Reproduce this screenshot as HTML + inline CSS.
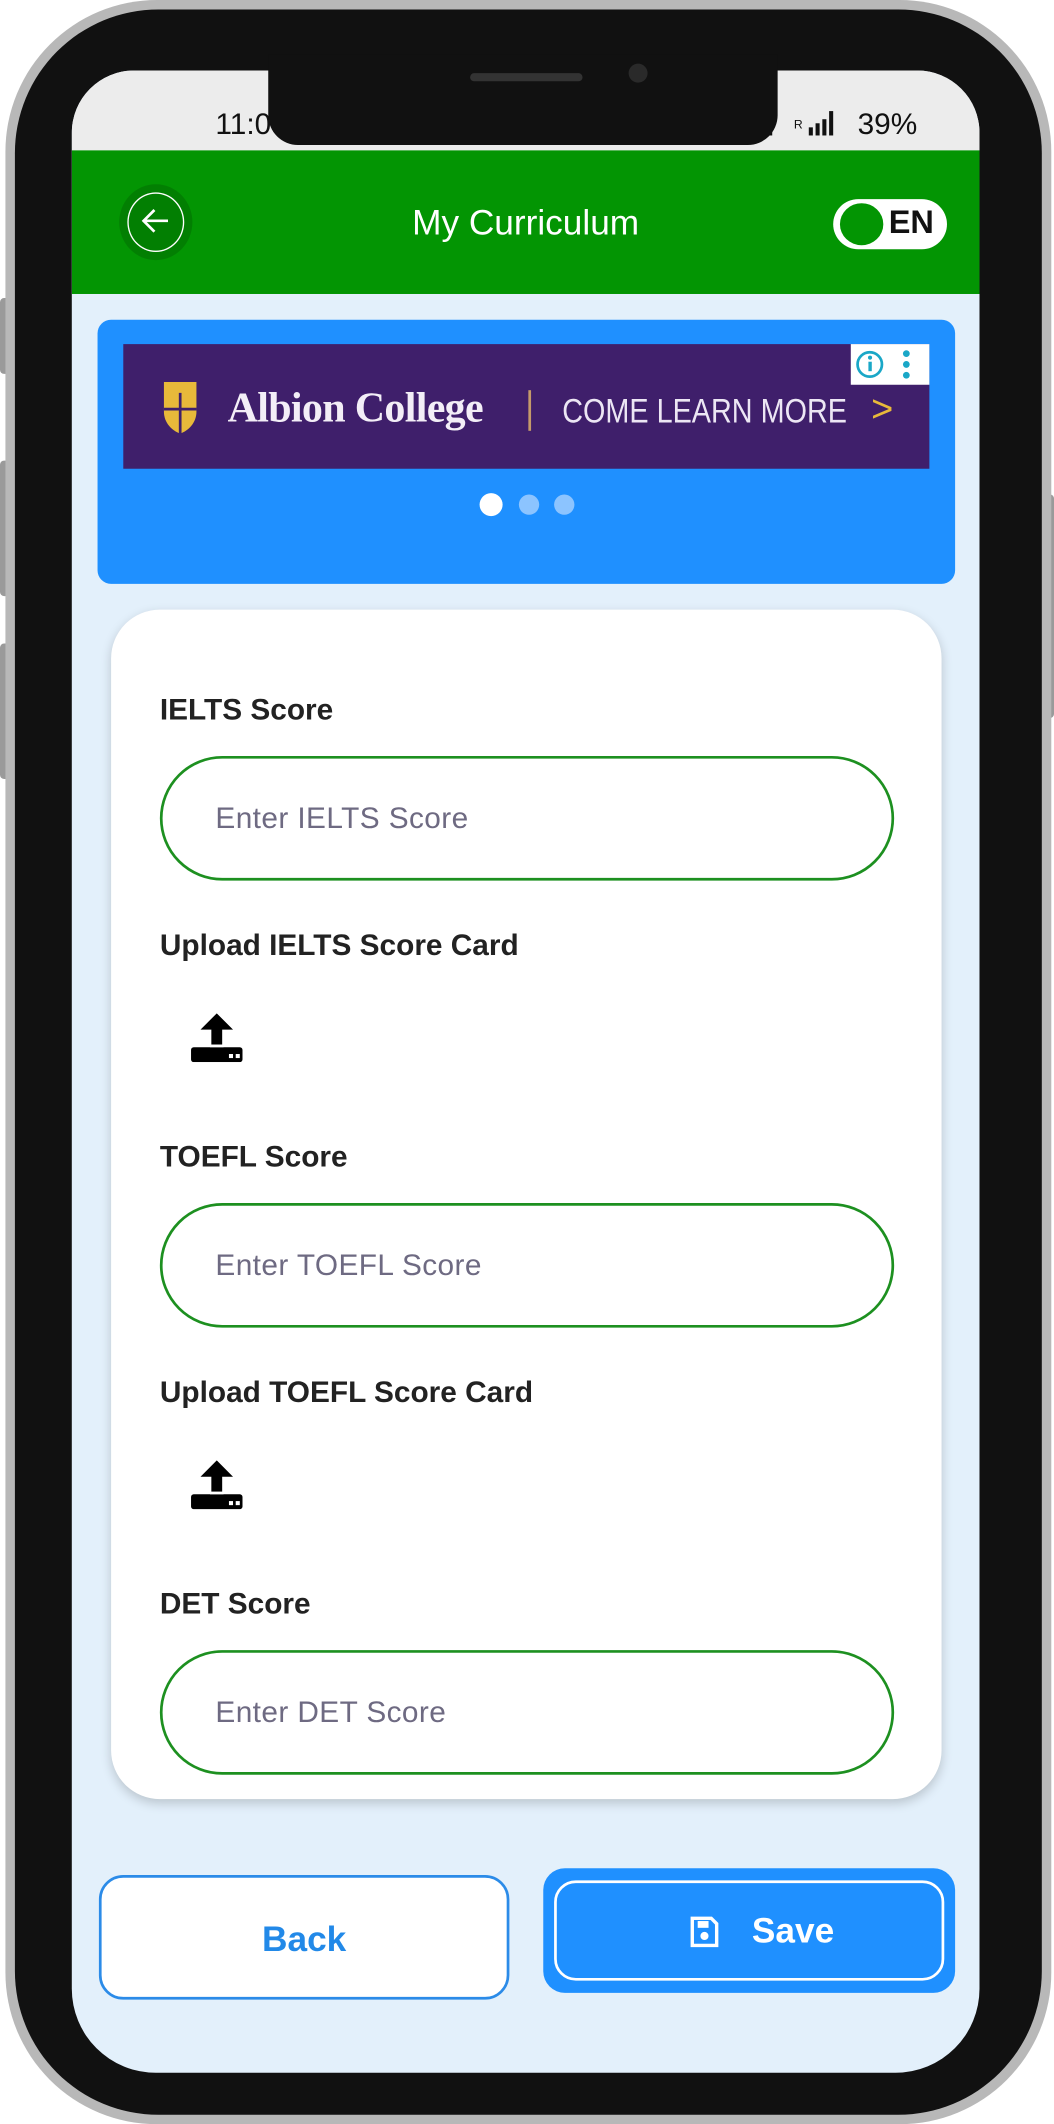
<!DOCTYPE html>
<html><head><meta charset="utf-8">
<style>
html,body{margin:0;padding:0;width:1054px;height:2124px;overflow:hidden;background:#fff;}
#w{position:absolute;left:0;top:0;width:778px;height:1568px;transform:scale(1.35476);transform-origin:0 0;font-family:"Liberation Sans",sans-serif;}
.a{position:absolute;}
.lbl{position:absolute;left:118px;font-weight:bold;font-size:22px;color:#222;}
.inp{position:absolute;left:118px;width:538px;height:88px;border:2px solid #1d9020;border-radius:46px;background:#fff;}
.inp span{position:absolute;left:39px;top:31px;font-size:22px;color:#6e6a82;letter-spacing:0.3px;}
</style></head><body><div id="w">
<div class="a" style="left:0;top:220px;width:8px;height:56px;background:#9a9a9a;border-radius:3px"></div>
<div class="a" style="left:0;top:340px;width:8px;height:100px;background:#9a9a9a;border-radius:3px"></div>
<div class="a" style="left:0;top:475px;width:8px;height:100px;background:#9a9a9a;border-radius:3px"></div>
<div class="a" style="left:770px;top:365px;width:8px;height:165px;background:#9a9a9a;border-radius:3px"></div>
<div class="a" style="left:4px;top:0;width:772px;height:1568px;background:#b8b8b8;border-radius:112px"></div>
<div class="a" style="left:11px;top:7px;width:758px;height:1554px;background:#111;border-radius:106px"></div>
<div class="a" style="left:53px;top:52px;width:670px;height:1478px;background:#e3f0fb;border-radius:46px 46px 62px 62px;overflow:hidden">
  <div class="a" style="left:0;top:0;width:670px;height:59px;background:#ececec"></div>
  <div class="a" style="left:106px;top:27px;font-size:22px;color:#111">11:05</div>
  <div class="a" style="left:580px;top:27px;font-size:22px;color:#111">39%</div>
  <div class="a" style="left:533px;top:35px;font-size:9px;color:#111">R</div>
  <svg class="a" style="left:508px;top:28px" width="70" height="22"><rect x="0" y="4" width="4" height="16" fill="#111"/><rect x="5" y="0" width="4" height="20" fill="#111"/><rect x="36" y="14" width="3" height="6" fill="#111"/><rect x="41" y="11" width="3" height="9" fill="#111"/><rect x="46" y="8" width="3" height="12" fill="#111"/><rect x="51" y="2" width="3" height="18" fill="#111"/></svg>
  <div class="a" style="left:0;top:59px;width:670px;height:106px;background:#039503"></div>
  <div class="a" style="left:35px;top:84px;width:54px;height:56px;border-radius:50%;background:#027f02"></div>
  <div class="a" style="left:41px;top:90px;width:40px;height:42px;border:1.5px solid #fff;border-radius:50%"></div>
  <svg class="a" style="left:49px;top:99px" width="26" height="24"><path d="M22 12H5M12 4L4 12l8 8" stroke="#fff" stroke-width="2" fill="none"/></svg>
  <div class="a" style="left:0;top:97px;width:670px;text-align:center;font-size:26px;color:#fff">My Curriculum</div>
  <div class="a" style="left:562px;top:95px;width:84px;height:37px;background:#fff;border-radius:19px"></div>
  <div class="a" style="left:567px;top:98px;width:32px;height:31px;background:#039503;border-radius:50%"></div>
  <div class="a" style="left:603px;top:99px;font-size:24px;font-weight:bold;color:#111">EN</div>
  <div class="a" style="left:19px;top:184px;width:633px;height:195px;background:#1f90ff;border-radius:10px"></div>
  <div class="a" style="left:38px;top:202px;width:595px;height:92px;background:#3f1f6b"></div>
  <svg class="a" style="left:66px;top:228px" width="28" height="42"><path d="M2 2h24v22c0 8-6 14-12 16C8 38 2 32 2 24z" fill="#e8b93a"/><path d="M14 10v30M2 22h24" stroke="#3f1f6b" stroke-width="2"/></svg>
  <div class="a" style="left:115px;top:231px;font-family:'Liberation Serif',serif;font-weight:bold;font-size:31px;color:#f3eef7;letter-spacing:-0.5px">Albion College</div>
  <div class="a" style="left:337px;top:236px;width:2px;height:30px;background:#c59a6a"></div>
  <div class="a" style="left:362px;top:238px;font-size:25px;color:#ece6f4;transform:scaleX(0.85);transform-origin:0 0;white-space:nowrap">COME LEARN MORE</div>
  <div class="a" style="left:590px;top:234px;font-size:28px;color:#e8b93a">&gt;</div>
  <div class="a" style="left:575px;top:202px;width:58px;height:30px;background:#fff"></div>
  <svg class="a" style="left:577px;top:204px" width="56" height="26"><circle cx="12" cy="13" r="9" stroke="#1aa7c7" stroke-width="2" fill="none"/><rect x="11" y="11" width="2.5" height="7" fill="#1aa7c7"/><circle cx="12.2" cy="8" r="1.5" fill="#1aa7c7"/><circle cx="39" cy="5" r="2.5" fill="#1aa7c7"/><circle cx="39" cy="13" r="2.5" fill="#1aa7c7"/><circle cx="39" cy="21" r="2.5" fill="#1aa7c7"/></svg>
  <div class="a" style="left:301px;top:312px;width:17px;height:17px;background:#fff;border-radius:50%"></div>
  <div class="a" style="left:330px;top:313px;width:15px;height:15px;background:#8cc4ff;border-radius:50%"></div>
  <div class="a" style="left:356px;top:313px;width:15px;height:15px;background:#8cc4ff;border-radius:50%"></div>
  <div class="a" style="left:29px;top:398px;width:613px;height:878px;background:#fff;border-radius:36px;box-shadow:0 3px 8px rgba(0,0,0,0.18)"></div>
  <div class="a" style="left:20px;top:1332px;width:299px;height:88px;border:2px solid #2b8be8;border-radius:18px;background:#fff"></div>
  <div class="a" style="left:20px;top:1364px;width:303px;text-align:center;font-size:26px;font-weight:bold;color:#2289e8">Back</div>
  <div class="a" style="left:348px;top:1327px;width:304px;height:92px;background:#1f90ff;border-radius:16px"></div>
  <div class="a" style="left:356px;top:1336px;width:284px;height:70px;border:2px solid #fff;border-radius:16px"></div>
  <svg class="a" style="left:456px;top:1362px" width="22" height="24"><path d="M2 2h14l4 4v16H2z" stroke="#fff" stroke-width="2.5" fill="none"/><rect x="6" y="4" width="8" height="5" fill="#fff"/><circle cx="11" cy="15" r="3" fill="#fff"/></svg>
  <div class="a" style="left:502px;top:1358px;font-size:26px;font-weight:bold;color:#fff">Save</div>
</div>
<div class="a" style="left:198px;top:40px;width:376px;height:67px;background:#111;border-radius:0 0 22px 22px"></div>
<div class="a" style="left:347px;top:54px;width:83px;height:6px;background:#333;border-radius:3px"></div>
<div class="a" style="left:464px;top:47px;width:14px;height:14px;background:#2a2a2a;border-radius:50%"></div>
<div class="lbl" style="top:511px">IELTS Score</div>
<div class="inp" style="top:558px"><span>Enter IELTS Score</span></div>
<div class="lbl" style="top:685px">Upload IELTS Score Card</div>
<svg class="a" style="left:141px;top:748px" width="38" height="36"><path d="M19 0L7 12h8v12h8V12h8z" fill="#000"/><rect x="0" y="25" width="38" height="11" rx="2" fill="#000"/><rect x="14" y="23" width="10" height="2" fill="#fff"/><rect x="28" y="30" width="3" height="3" fill="#fff"/><rect x="33" y="30" width="3" height="3" fill="#fff"/></svg>
<div class="lbl" style="top:841px">TOEFL Score</div>
<div class="inp" style="top:888px"><span>Enter TOEFL Score</span></div>
<div class="lbl" style="top:1015px">Upload TOEFL Score Card</div>
<svg class="a" style="left:141px;top:1078px" width="38" height="36"><path d="M19 0L7 12h8v12h8V12h8z" fill="#000"/><rect x="0" y="25" width="38" height="11" rx="2" fill="#000"/><rect x="14" y="23" width="10" height="2" fill="#fff"/><rect x="28" y="30" width="3" height="3" fill="#fff"/><rect x="33" y="30" width="3" height="3" fill="#fff"/></svg>
<div class="lbl" style="top:1171px">DET Score</div>
<div class="inp" style="top:1218px"><span>Enter DET Score</span></div>
</div></body></html>
